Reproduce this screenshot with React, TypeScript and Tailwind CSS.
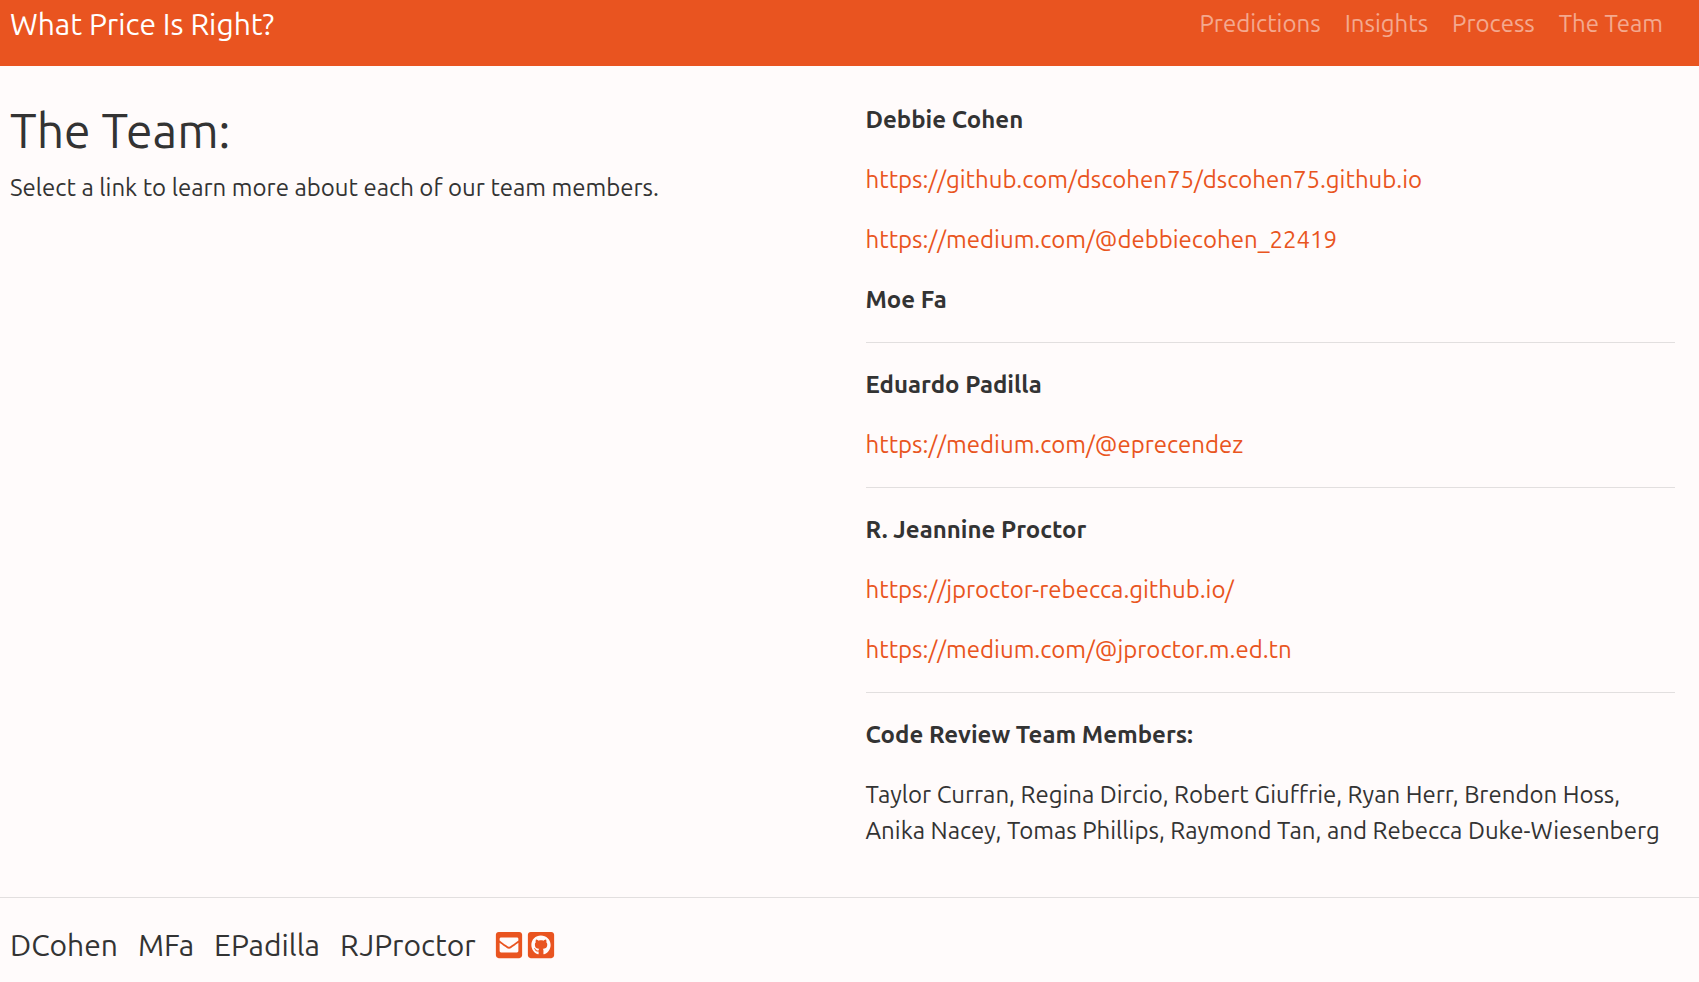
import { FaEnvelopeSquare, FaGithubSquare } from "react-icons/fa";

const navLinks = ["Predictions", "Insights", "Process", "The Team"];
const authors = ["DCohen", "MFa", "EPadilla", "RJProctor"];

function TeamLink({ url }: { url: string }) {
  return (
    <p className="mb-6">
      <a href={url} className="text-[#e95420] hover:underline">{url}</a>
    </p>
  );
}

function Name({ children }: { children: string }) {
  return <p className="mb-6 font-bold">{children}</p>;
}

function Rule() {
  return <hr className="mb-6 border-t border-[#e2dfdf]" />;
}

export default function App() {
  return (
    <div className="min-h-screen bg-[#fffbfb] font-[Ubuntu,'Noto_Sans',sans-serif] text-2xl leading-9 text-[#333]">
      <nav className="flex h-[66px] items-start justify-between bg-[#e95420] pl-2.5 pr-9 pt-1">
        <a href="#" className="text-3xl leading-10 text-white">What Price Is Right?</a>
        <ul className="flex gap-6 leading-10">
          {navLinks.map((label) => (
            <li key={label}><a href="#" className="text-white/50 hover:text-white">{label}</a></li>
          ))}
        </ul>
      </nav>
      <main className="grid grid-cols-2 pb-12 pt-9">
        <section className="px-2.5">
          <h1 className="mb-3 text-5xl leading-[56px]">The Team:</h1>
          <p>Select a link to learn more about each of our team members.</p>
        </section>
        <section className="pl-4 pr-6">
          <Name>Debbie Cohen</Name>
          <TeamLink url="https://github.com/dscohen75/dscohen75.github.io" />
          <TeamLink url="https://medium.com/@debbiecohen_22419" />
          <Name>Moe Fa</Name>
          <Rule />
          <Name>Eduardo Padilla</Name>
          <TeamLink url="https://medium.com/@eprecendez" />
          <Rule />
          <Name>R. Jeannine Proctor</Name>
          <TeamLink url="https://jproctor-rebecca.github.io/" />
          <TeamLink url="https://medium.com/@jproctor.m.ed.tn" />
          <Rule />
          <Name>Code Review Team Members:</Name>
          <p>Taylor Curran, Regina Dircio, Robert Giuffrie, Ryan Herr, Brendon Hoss, Anika Nacey, Tomas Phillips, Raymond Tan, and Rebecca Duke-Wiesenberg</p>
        </section>
      </main>
      <footer className="flex items-center border-t border-[#e2dfdf] px-2.5 pt-6 text-3xl leading-[46px]">
        <div className="flex gap-5">
          {authors.map((author) => <span key={author}>{author}</span>)}
        </div>
        <div className="ml-[18px] flex gap-0.5 text-[#e95420]">
          <a href="#" aria-label="Email"><FaEnvelopeSquare /></a>
          <a href="#" aria-label="GitHub"><FaGithubSquare /></a>
        </div>
      </footer>
    </div>
  );
}
